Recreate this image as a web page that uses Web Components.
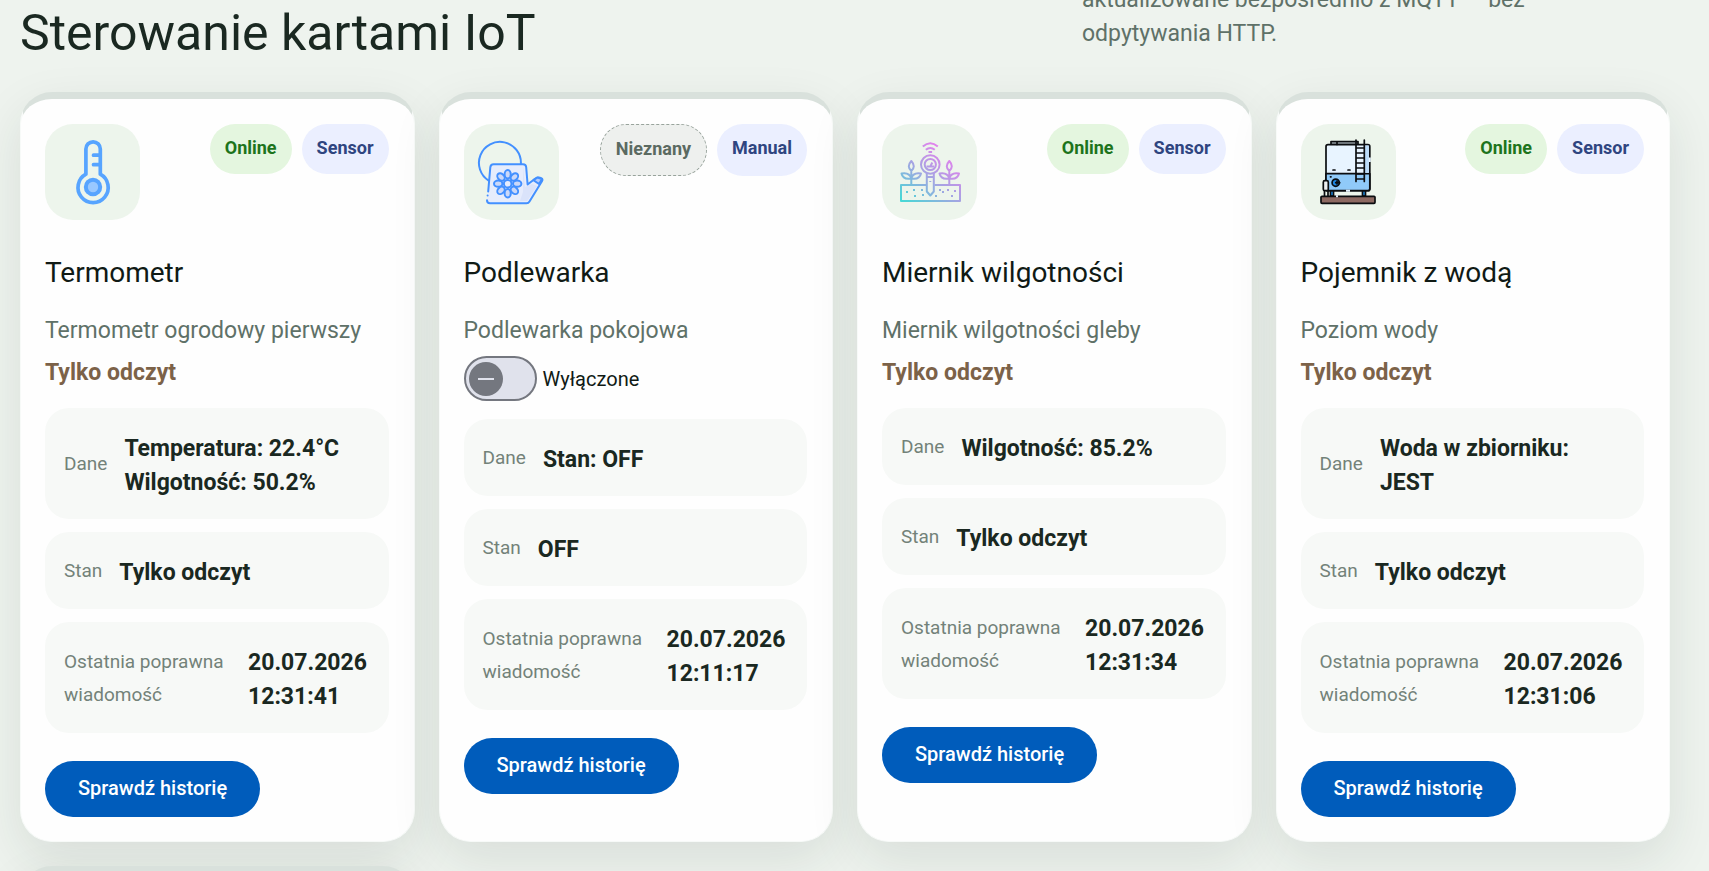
<!DOCTYPE html>
<html lang="pl">
<head>
<meta charset="utf-8">
<title>Sterowanie kartami IoT</title>
<style>
  body {
    margin: 0;
    height: 100vh;
    overflow: hidden;
    background: #eef3ee;
    color: #1a2821;
    font: 400 23px/34px Roboto, "Open Sans", sans-serif;
  }
</style>
</head>
<body>
<iot-board>
  <span slot="heading">Sterowanie kartami IoT</span>
  <span slot="lead">aktualizowane bezpośrednio z MQTT — bez<br>odpytywania HTTP.</span>

  <iot-card>
    <iot-icon slot="icon" name="thermometer"></iot-icon>
    <iot-chip slot="chips" kind="online">Online</iot-chip>
    <iot-chip slot="chips">Sensor</iot-chip>
    <span slot="name">Termometr</span>
    <span slot="description">Termometr ogrodowy pierwszy</span>
    <iot-readonly slot="control">Tylko odczyt</iot-readonly>
    <iot-reading label="Dane">Temperatura: 22.4°C<br>Wilgotność: 50.2%</iot-reading>
    <iot-reading label="Stan">Tylko odczyt</iot-reading>
    <iot-reading label="Ostatnia poprawna wiadomość">20.07.2026 12:31:41</iot-reading>
    <iot-button slot="action">Sprawdź historię</iot-button>
  </iot-card>

  <iot-card>
    <iot-icon slot="icon" name="watering-can"></iot-icon>
    <iot-chip slot="chips" kind="unknown">Nieznany</iot-chip>
    <iot-chip slot="chips">Manual</iot-chip>
    <span slot="name">Podlewarka</span>
    <span slot="description">Podlewarka pokojowa</span>
    <iot-switch slot="control">Wyłączone</iot-switch>
    <iot-reading label="Dane">Stan: OFF</iot-reading>
    <iot-reading label="Stan">OFF</iot-reading>
    <iot-reading label="Ostatnia poprawna wiadomość">20.07.2026 12:11:17</iot-reading>
    <iot-button slot="action">Sprawdź historię</iot-button>
  </iot-card>

  <iot-card>
    <iot-icon slot="icon" name="soil-meter"></iot-icon>
    <iot-chip slot="chips" kind="online">Online</iot-chip>
    <iot-chip slot="chips">Sensor</iot-chip>
    <span slot="name">Miernik wilgotności</span>
    <span slot="description">Miernik wilgotności gleby</span>
    <iot-readonly slot="control">Tylko odczyt</iot-readonly>
    <iot-reading label="Dane">Wilgotność: 85.2%</iot-reading>
    <iot-reading label="Stan">Tylko odczyt</iot-reading>
    <iot-reading label="Ostatnia poprawna wiadomość">20.07.2026 12:31:34</iot-reading>
    <iot-button slot="action">Sprawdź historię</iot-button>
  </iot-card>

  <iot-card>
    <iot-icon slot="icon" name="tank"></iot-icon>
    <iot-chip slot="chips" kind="online">Online</iot-chip>
    <iot-chip slot="chips">Sensor</iot-chip>
    <span slot="name">Pojemnik z wodą</span>
    <span slot="description">Poziom wody</span>
    <iot-readonly slot="control">Tylko odczyt</iot-readonly>
    <iot-reading label="Dane">Woda w zbiorniku:<br>JEST</iot-reading>
    <iot-reading label="Stan">Tylko odczyt</iot-reading>
    <iot-reading label="Ostatnia poprawna wiadomość">20.07.2026 12:31:06</iot-reading>
    <iot-button slot="action">Sprawdź historię</iot-button>
  </iot-card>

  <iot-card></iot-card>
</iot-board>

<script>
const ICONS = {
  thermometer: `
    <g fill="none" stroke="#57a4ff" stroke-width="3.7" stroke-linecap="round">
      <path d="M24.9 34.2V9a7.2 7.2 0 0 1 14.4 0v25.2a15.1 15.1 0 1 1-14.4 0z" stroke-linejoin="round"/>
      <path d="M32.5 15.2h6M32.5 24.7h6"/>
    </g>
    <circle cx="32" cy="47" r="9.2" fill="#57a4ff"/>
    <circle cx="32" cy="47" r="5.2" fill="#99c8ff"/>`,

  'watering-can': `
    <g stroke="#4390ff" stroke-width="2" stroke-linecap="round" stroke-linejoin="round">
      <path d="M10 40.8A21 21 0 1 1 41.9 24" fill="none"/>
      <path d="M9.2 52 11.3 27.3q.3-3 3.3-3H44q3 0 3.2 3L48.6 44.5 56 38.7q3.2-2.3 6.5-.4 1.5 1 .6 2.6L50.5 61.5q-1 1.7-3 1.7H11q-3 0-3-3z" fill="#e6ecfc" stroke="none"/>
      <path d="M44 27 46 47 53 44 58 46 48 61H41L44 52z" fill="#d2ddf8" stroke="none" opacity=".6"/>
      <path d="M9.2 51.5 11.3 27.3q.3-3 3.3-3H44q3 0 3.2 3L48.6 44.5 56 38.7q3.2-2.3 6.5-.4 1.5 1 .6 2.6L50.5 61.5q-1 1.7-3 1.7H11q-3 0-3-3" fill="none"/>
      <path d="M8.6 55.5v.1" fill="none"/>
      <path d="M54.5 40.2l4-2.7 4.5 1.5-3 5z" fill="#b5ccfb"/>
      <g fill="#cbd8f8">
        <ellipse cx="28.7" cy="34.2" rx="3.1" ry="4.2"/>
        <ellipse cx="28.7" cy="34.2" rx="3.1" ry="4.2" transform="rotate(90 28.7 43.7)"/>
        <ellipse cx="28.7" cy="34.2" rx="3.1" ry="4.2" transform="rotate(180 28.7 43.7)"/>
        <ellipse cx="28.7" cy="34.2" rx="3.1" ry="4.2" transform="rotate(270 28.7 43.7)"/>
        <ellipse cx="28.7" cy="34.2" rx="3.1" ry="4.2" transform="rotate(45 28.7 43.7)"/>
        <ellipse cx="28.7" cy="34.2" rx="3.1" ry="4.2" transform="rotate(135 28.7 43.7)"/>
        <ellipse cx="28.7" cy="34.2" rx="3.1" ry="4.2" transform="rotate(225 28.7 43.7)"/>
        <ellipse cx="28.7" cy="34.2" rx="3.1" ry="4.2" transform="rotate(315 28.7 43.7)"/>
        <circle cx="28.7" cy="43.7" r="3.8" fill="#e6ecfc"/>
      </g>
    </g>`,

  'soil-meter': `
    <linearGradient id="g" gradientUnits="userSpaceOnUse" x1="6" y1="62" x2="50" y2="8">
      <stop offset="0" stop-color="#48d8d6"/>
      <stop offset=".5" stop-color="#a3a5e2"/>
      <stop offset="1" stop-color="#ec7cee"/>
    </linearGradient>
    <g fill="none" stroke="url(#g)" stroke-width="2" stroke-linejoin="round">
      <path d="M28 45H3v16H62V45H36.5"/>
      <circle cx="32.3" cy="24.5" r="9.3"/>
      <circle cx="32.3" cy="24.5" r="5.6"/>
      <path d="M28.5 26.5h7.6M32.3 26.5l2-4"/>
      <path d="M28.8 33v18.5l3.5 4 3.5-4V33M28.8 37h7M32.3 41v1"/>
      <path d="M24.8 6.5q7.5-6.5 15 0M27.8 9.7q4.5-3.5 9 0M30.5 12h3.6"/>
      <path d="M13.3 45V30M13.3 21q-5 5.5 0 10 5-4.5 0-10zM13.3 38.5Q5 40 3.5 33.5q8-1.5 9.8 5zM13.3 38.5Q21.5 40 23 33.5q-8-1.5-9.7 5z"/>
      <path d="M51.3 45V30M51.3 21q-5 5.5 0 10 5-4.5 0-10zM51.3 38.5Q43 40 41.5 33.5q8-1.5 9.8 5zM51.3 38.5Q59.5 40 61 33.5q-8-1.5-9.7 5z"/>
    </g>
    <path fill="url(#g)" d="M8 51h2v2H8zM15 49h2v2h-2zM16 55h2v2h-2zM23 49h2v2h-2zM24 54h2v2h-2zM37 55h2v2h-2zM41 49h2v2h-2zM44 51h2v2h-2zM49 49h2v2h-2zM53 55h2v2h-2zM56 50h2v2h-2z"/>`,

  tank: `
    <g stroke="#0b0d10" stroke-width="1.7" stroke-linejoin="round" stroke-linecap="round">
      <rect x="15" y="1.5" width="27" height="3.5" fill="#8f979c"/>
      <rect x="10" y="4.7" width="43.8" height="46" rx="2" fill="#e8f4ff"/>
      <path d="M10 33.7h43.8v15q0 2-2 2H12q-2 0-2-2z" fill="#90caf9"/>
      <path d="M48.5 5.5h4.4V33h-4.4z" fill="#bcdcfa" stroke="none"/>
      <path d="M14.5 51h3v5h-3zM46.5 51h3v5h-3z" fill="#2196f3"/>
      <rect x="7.3" y="40.7" width="5" height="10" rx="1.5" fill="#eef1f3"/>
      <path d="M8.5 51v5M12 51v5M17 30h2M32 30h2M14.5 36.8h.5M21 2v2.5" fill="none"/>
      <circle cx="19.7" cy="42.7" r="3.6" fill="#1e88e5"/>
      <path d="M19.7 42.7h4M21 41v3" fill="none"/>
      <path d="M40 0v41.5M48.3 0v41.5M40 8h8.3M40 13h8.3M40 18h8.3M40 23h8.3M40 28h8.3M40 34h8.3M40 39h8.3" fill="none"/>
      <rect x="5" y="56.3" width="54" height="7" rx="1" fill="#8d6962"/>
    </g>
    <path d="M53.8 17.5v4.5M30 50.7h4M20 56.3h2" stroke="#e8f4ff" stroke-width="2"/>`
};

class IotBoard extends HTMLElement {
  constructor() {
    super();
    this.attachShadow({ mode: 'open' }).innerHTML = `
      <style>
        /* the view is scrolled: the lead starts above the fold */
        :host {
          display: block;
          margin-top: -17px;
          padding: 0 39px 0 20px;
        }
        header {
          display: grid;
          grid-template-columns: 1fr 588px;
          align-items: end;
          margin-bottom: 41px;
        }
        h1 {
          margin: 0;
          font-weight: 400;
          font-size: 50px;
          line-height: 36px;
        }
        p {
          margin: 0;
          color: #5f7168;
        }
        .grid {
          display: grid;
          grid-template-columns: repeat(4, minmax(0, 1fr));
          gap: 24px;
        }
      </style>
      <header>
        <h1><slot name="heading"></slot></h1>
        <p><slot name="lead"></slot></p>
      </header>
      <main class="grid"><slot></slot></main>`;
  }
}

class IotCard extends HTMLElement {
  constructor() {
    super();
    this.attachShadow({ mode: 'open' }).innerHTML = `
      <style>
        :host {
          display: flex;
          flex-direction: column;
          align-items: stretch;
          box-sizing: border-box;
          padding: 25px 25px 24px 24px;
          border: 1px solid #f7faf8;
          border-top: 7px solid #d9e1dc;
          border-radius: 32px;
          background: #fefefe;
          box-shadow: 0 18px 50px rgba(26, 50, 36, 0.1);
        }
        .top {
          display: flex;
          justify-content: space-between;
          align-items: flex-start;
        }
        .chips {
          display: flex;
          gap: 10px;
        }
        h2 {
          margin: 35px 0 23px;
          color: #101a15;
          font-weight: 400;
          font-size: 28px;
          line-height: 36px;
        }
        p {
          margin: 0 0 8px;
          color: #5f7168;
        }
        .readings {
          display: flex;
          flex-direction: column;
          gap: 13px;
          margin: 18px 0 28px;
        }
      </style>
      <div class="top">
        <slot name="icon"></slot>
        <div class="chips"><slot name="chips"></slot></div>
      </div>
      <h2><slot name="name"></slot></h2>
      <p><slot name="description"></slot></p>
      <slot name="control"></slot>
      <div class="readings"><slot></slot></div>
      <slot name="action"></slot>`;
  }
}

class IotIcon extends HTMLElement {
  constructor() {
    super();
    this.attachShadow({ mode: 'open' });
  }

  connectedCallback() {
    this.shadowRoot.innerHTML = `
      <style>
        :host {
          display: flex;
          align-items: center;
          justify-content: center;
          width: 95px;
          height: 96px;
          border-radius: 28px;
          background: #edf5ec;
        }
        svg {
          width: 64px;
          height: 64px;
          overflow: visible;
        }
      </style>
      <svg viewBox="0 0 64 64" aria-hidden="true">${ICONS[this.getAttribute('name')] || ''}</svg>`;
  }
}

class IotChip extends HTMLElement {
  constructor() {
    super();
    this.attachShadow({ mode: 'open' }).innerHTML = `
      <style>
        :host {
          display: block;
          padding: 7px 15px 9px;
          border-radius: 26px;
          background: #ebefff;
          color: #2f4580;
          font-size: 18px;
          font-weight: 700;
        }
        :host([kind="online"]) {
          background: #e4f6df;
          color: #1d741c;
        }
        :host([kind="unknown"]) {
          border: 1px dashed #98a39c;
          background: #eef0ee;
          color: #5b6a61;
        }
      </style>
      <slot></slot>`;
  }
}

class IotReadonly extends HTMLElement {
  constructor() {
    super();
    this.attachShadow({ mode: 'open' }).innerHTML = `
      <style>
        :host {
          display: block;
          color: #7c6248;
          font-weight: 700;
        }
      </style>
      <slot></slot>`;
  }
}

class IotSwitch extends HTMLElement {
  constructor() {
    super();
    this.attachShadow({ mode: 'open' }).innerHTML = `
      <style>
        :host { display: block; }
        label {
          display: flex;
          align-items: center;
          gap: 6px;
          color: #101a15;
          font-size: 20px;
        }
        input {
          appearance: none;
          display: flex;
          align-items: center;
          box-sizing: border-box;
          width: 73px;
          height: 45px;
          margin: 0;
          padding: 0 3px;
          border: 2px solid #74777f;
          border-radius: 23px;
          background: #e0e2ec;
        }
        input::before {
          content: "";
          width: 34px;
          height: 34px;
          border-radius: 50%;
          background: linear-gradient(#e0e2ec, #e0e2ec) center / 16px 2px no-repeat #74777f;
        }
        input:checked {
          justify-content: flex-end;
        }
      </style>
      <label><input type="checkbox" role="switch"><span><slot></slot></span></label>`;
  }
}

class IotReading extends HTMLElement {
  constructor() {
    super();
    this.attachShadow({ mode: 'open' }).innerHTML = `
      <style>
        :host {
          display: flex;
          align-items: center;
          gap: 17px;
          padding: 19px;
          border-radius: 24px;
          background: #f7f9f7;
        }
        .label {
          flex-shrink: 0;
          max-width: 167px;
          color: #738279;
          font-size: 19px;
          line-height: 33px;
        }
        .value {
          padding-top: 5px;
          font-weight: 700;
        }
      </style>
      <span class="label"></span>
      <span class="value"><slot></slot></span>`;
  }

  connectedCallback() {
    this.shadowRoot.querySelector('.label').textContent = this.getAttribute('label');
  }
}

class IotButton extends HTMLElement {
  constructor() {
    super();
    this.attachShadow({ mode: 'open' }).innerHTML = `
      <style>
        :host { display: block; }
        button {
          padding: 10px 33px 12px;
          border: 0;
          border-radius: 28px;
          background: #005cbb;
          color: #fff;
          font: inherit;
          font-size: 20px;
          font-weight: 500;
          cursor: pointer;
        }
      </style>
      <button type="button"><slot></slot></button>`;
  }
}

customElements.define('iot-icon', IotIcon);
customElements.define('iot-chip', IotChip);
customElements.define('iot-readonly', IotReadonly);
customElements.define('iot-switch', IotSwitch);
customElements.define('iot-reading', IotReading);
customElements.define('iot-button', IotButton);
customElements.define('iot-card', IotCard);
customElements.define('iot-board', IotBoard);
</script>
</body>
</html>
